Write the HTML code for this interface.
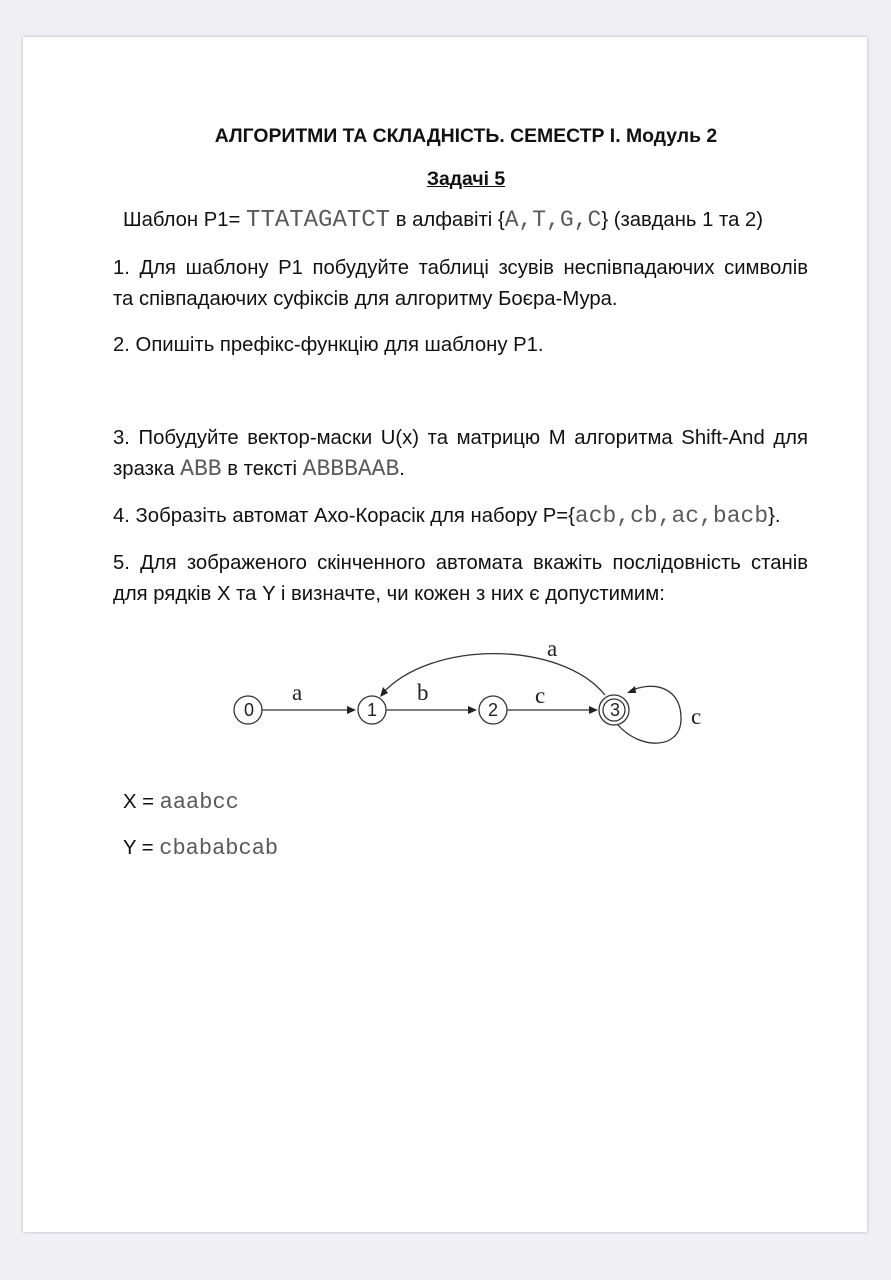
<!DOCTYPE html>
<html><head><meta charset="utf-8"><style>
body{margin:0;width:891px;height:1280px;background:#f0eff4;position:relative;overflow:hidden;font-family:"Liberation Sans","DejaVu Sans",sans-serif;color:#111}
.page{position:absolute;left:23px;top:37px;width:844px;height:1195px;background:#fff;box-shadow:0 0 3px rgba(0,0,0,.25)}
.l{position:absolute;font-size:20.3px;line-height:22px;white-space:nowrap;margin-top:2px}
.j{left:113px;width:695px;text-align:justify;text-align-last:justify;white-space:normal;height:22px;overflow:visible}
.m{font-family:"Liberation Mono",monospace;color:#5a5a5a;font-size:23px}
</style></head><body>
<div class="page"></div>
<div class="l" style="left:0;width:932px;text-align:center;top:123px;font-weight:bold;font-size:19.4px">АЛГОРИТМИ ТА СКЛАДНІСТЬ. СЕМЕСТР І. Модуль 2</div>
<div class="l" style="left:0;width:932px;text-align:center;top:166px;font-weight:bold;text-decoration:underline;font-size:19.4px">Задачі 5</div>
<div class="l" style="left:123px;top:207px">Шаблон P1= <span class="m" style="font-size:24px">TTATAGATCT</span> в алфавіті {<span class="m">A,T,G,C</span>} (завдань 1 та 2)</div>
<div class="l j" style="top:255px">1. Для шаблону P1 побудуйте таблиці зсувів неспівпадаючих символів</div>
<div class="l" style="left:113px;top:286px">та співпадаючих суфіксів для алгоритму Боєра-Мура.</div>
<div class="l" style="left:113px;top:332px">2. Опишіть префікс-функцію для шаблону P1.</div>
<div class="l j" style="top:425px">3. Побудуйте вектор-маски U(x) та матрицю M алгоритма Shift-And для</div>
<div class="l" style="left:113px;top:456px">зразка <span class="m">ABB</span> в тексті <span class="m">ABBBAAB</span>.</div>
<div class="l" style="left:113px;top:503px">4. Зобразіть автомат Ахо-Корасік для набору P={<span class="m">acb,cb,ac,bacb</span>}.</div>
<div class="l j" style="top:550px">5. Для зображеного скінченного автомата вкажіть послідовність станів</div>
<div class="l" style="left:113px;top:581px">для рядків X та Y і визначте, чи кожен з них є допустимим:</div>
<svg style="position:absolute;left:0;top:0" width="891" height="1280" font-family="Liberation Serif,serif">
<g fill="none" stroke="#333" stroke-width="1.3">
<circle cx="248" cy="710" r="14"/><circle cx="372" cy="710" r="14"/><circle cx="493" cy="710" r="14"/>
<circle cx="614" cy="710" r="15"/><circle cx="614" cy="710" r="11"/>
<line x1="262" y1="710" x2="352" y2="710"/><line x1="386" y1="710" x2="473" y2="710"/><line x1="507" y1="710" x2="593" y2="710"/>
<path d="M605 695 C560 640 430 640 382 694"/>
<path d="M618 725 C640 750 680 750 681 720 C682 688 655 680 630 691"/>
</g>
<g fill="#222"><path d="M356 710l-9-4v8z"/><path d="M477 710l-9-4v8z"/><path d="M598 710l-9-4v8z"/><path d="M380 697l3-10 5 6z"/><path d="M627 693l8-7 1 7z"/></g>
<g font-size="23" fill="#222"><text x="292" y="700">a</text><text x="417" y="700">b</text><text x="535" y="703">c</text><text x="547" y="656">a</text><text x="691" y="724">c</text></g>
<g font-family="Liberation Sans,sans-serif" font-size="18" fill="#222" text-anchor="middle"><text x="249" y="716">0</text><text x="372" y="716">1</text><text x="493" y="716">2</text><text x="615" y="716">3</text></g>
</svg>
<div class="l" style="left:123px;top:789px">X = <span class="m" style="font-size:22px">aaabcc</span></div>
<div class="l" style="left:123px;top:835px">Y = <span class="m" style="font-size:22px">cbababcab</span></div>
</body></html>
